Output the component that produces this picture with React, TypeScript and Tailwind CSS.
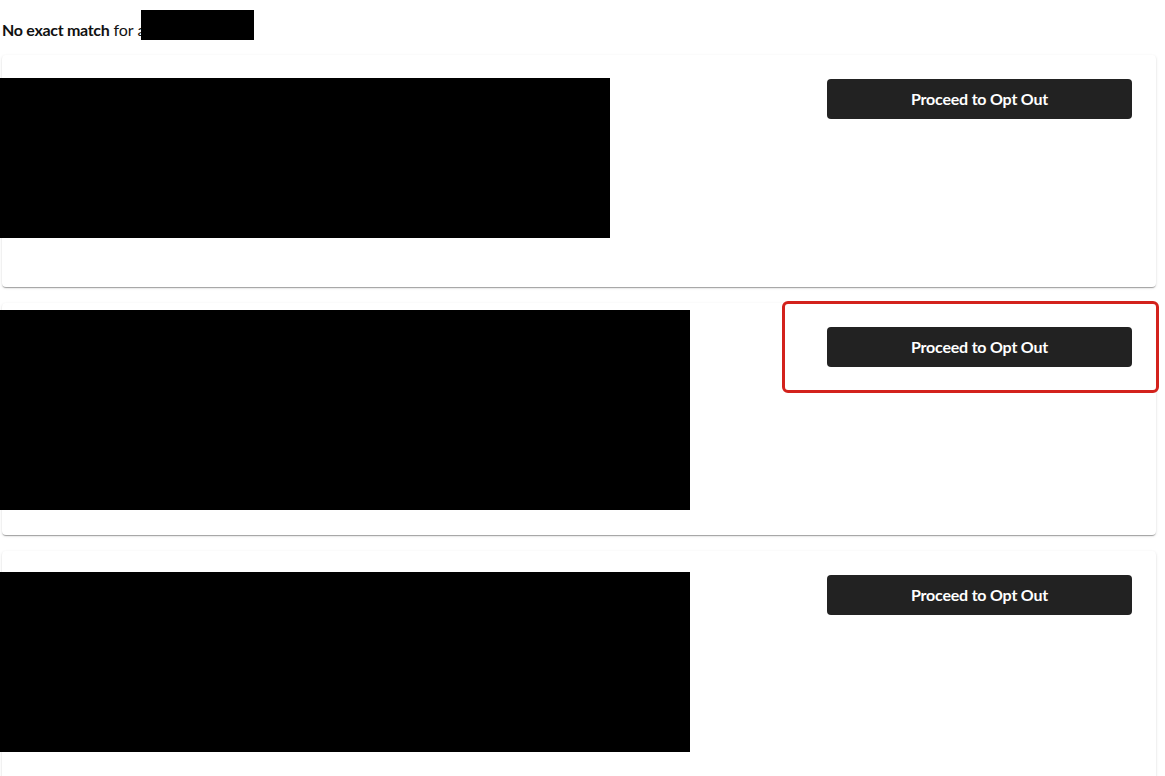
import React from "react";

const cards = [
  { blockW: "w-[610px]", blockH: "h-[160px]", blockTop: "mt-[23px]", highlight: false },
  { blockW: "w-[690px]", blockH: "h-[200px]", blockTop: "mt-[7px]", highlight: true },
  { blockW: "w-[690px]", blockH: "h-[180px]", blockTop: "mt-[21px]", highlight: false },
];

function OptOutButton() {
  return (
    <button className="w-[305px] h-[40px] rounded-[4px] bg-[#222222] text-white text-[16px] font-bold tracking-[-0.2px] flex items-center justify-center">
      Proceed to Opt Out
    </button>
  );
}

export default function App() {
  return (
    <div className="min-h-[776px] bg-white text-[#111] font-['Lato','Noto_Sans',sans-serif] overflow-hidden">
      {/* Header */}
      <div className="flex items-end h-[30px] mt-[10px] px-[2px] text-[16px] leading-[20px]">
        <span className="font-bold tracking-[-0.3px]">No exact match</span>
        <span className="ml-[4px]">for a</span>
        <span className="-ml-[4px] self-start w-[113px] h-[30px] bg-black" />
      </div>

      {/* Result cards */}
      <div className="mt-[15px] ml-[2px] w-[1154px] flex flex-col gap-[16px]">
        {cards.map((c, i) => (
          <div
            key={i}
            className="relative h-[232px] bg-white rounded-[4px] shadow-[0_2px_1px_-1px_rgba(0,0,0,0.2),0_1px_1px_0_rgba(0,0,0,0.14),0_1px_3px_0_rgba(0,0,0,0.12)] flex justify-between"
          >
            <div className={`-ml-[2px] ${c.blockTop} ${c.blockW} ${c.blockH} bg-black`} />
            <div className="pt-[24px] pr-[24px]">
              <OptOutButton />
            </div>
            {c.highlight && (
              <div className="absolute left-[780px] -top-[2px] w-[377px] h-[92px] rounded-[6px] border-[3px] border-[#d3221c]" />
            )}
          </div>
        ))}
      </div>
    </div>
  );
}
